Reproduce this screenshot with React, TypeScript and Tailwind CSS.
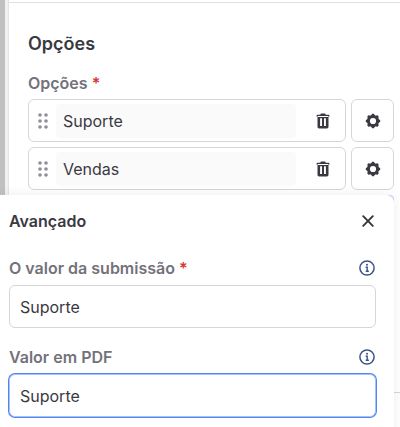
import { useState } from 'react';

interface OptionRowProps {
  label: string;
  active?: boolean;
}

interface AdvancedFieldProps {
  id: string;
  label: string;
  required?: boolean;
  focused?: boolean;
}

function GripIcon() {
  return (
    <svg width="10" height="16" viewBox="0 0 10 16" fill="#8e8d96" aria-hidden="true">
      {[2, 8, 14].map((y) => (
        <g key={y}>
          <circle cx="2" cy={y} r="1.8" />
          <circle cx="8" cy={y} r="1.8" />
        </g>
      ))}
    </svg>
  );
}

function TrashIcon() {
  return (
    <svg width="14" height="16" viewBox="0 0 14 16" fill="#3a3941" aria-hidden="true">
      <path
        fillRule="evenodd"
        d="M5 .5h4l.8 1.200H13.300v2.200H.7V1.700h3.500zM1.500 3h11v10.800q0 1.600-1.600 1.600H3.100q-1.600 0-1.600-1.600zM4.100 5.200v7.800h1.900V5.200zM8 5.200v7.800h1.900V5.200z"
      />
    </svg>
  );
}

function GearIcon() {
  return (
    <svg width="16" height="16" viewBox="0 0 16 16" aria-hidden="true">
      <g fill="#3a3941">
        {[0, 45, 90, 135, 180, 225, 270, 315].map((angle) => (
          <path key={angle} d="M5.600 3L7.200.8h1.600L10.400 3z" transform={`rotate(${angle} 8 8)`} />
        ))}
      </g>
      <circle cx="8" cy="8" r="4.400" fill="none" stroke="#3a3941" strokeWidth="2.600" />
    </svg>
  );
}

function InfoIcon() {
  return (
    <svg width="16" height="16" viewBox="0 0 16 16" fill="none" stroke="#3c5488" aria-hidden="true">
      <circle cx="8" cy="8" r="7.100" strokeWidth="1.500" />
      <path d="M6.600 7.200h1.600v4M6.700 11.300h3.200" strokeWidth="1.400" />
      <circle cx="8" cy="4.700" r="1" fill="#3c5488" stroke="none" />
    </svg>
  );
}

function CloseIcon() {
  return (
    <svg width="12" height="12" viewBox="0 0 12 12" stroke="#35343b" strokeWidth="1.900" strokeLinecap="round" aria-hidden="true">
      <path d="M1.200 1.200l9.600 9.600M10.800 1.200l-9.600 9.600" />
    </svg>
  );
}

function OptionRow({ label, active }: OptionRowProps) {
  const [value, setValue] = useState(label);

  return (
    <div className="flex h-[43px] gap-[5px]">
      <div className="flex min-w-0 flex-1 items-center rounded-md border border-[#d6d6d8] pr-[15px] pl-[9px]">
        <GripIcon />
        <input
          aria-label="Opção"
          value={value}
          onChange={(e) => setValue(e.target.value)}
          className="ml-2 h-[34px] min-w-0 flex-1 rounded bg-[#fafafa] px-[7px] text-base text-[#3a3941] outline-none"
        />
        <button type="button" aria-label="Remover" className="ml-5">
          <TrashIcon />
        </button>
      </div>
      <button
        type="button"
        aria-label="Configurar"
        className={`flex w-[43px] items-center justify-center border ${
          active ? 'rounded border-[#c9d6fb] bg-[#dce6fd]' : 'rounded-md border-[#d6d6d8]'
        }`}
      >
        <GearIcon />
      </button>
    </div>
  );
}

function AdvancedField({ id, label, required, focused }: AdvancedFieldProps) {
  const [value, setValue] = useState('Suporte');

  return (
    <div>
      <div className="mb-px flex h-8 items-center justify-between">
        <label htmlFor={id} className="text-base font-semibold text-[#73727b]">
          {label}
          {required && <span className="text-[#d33a2f]"> *</span>}
        </label>
        <button type="button" aria-label="Mais informações" className="mr-px">
          <InfoIcon />
        </button>
      </div>
      <input
        id={id}
        value={value}
        onChange={(e) => setValue(e.target.value)}
        className={`h-[43px] w-full rounded-md border bg-white px-2.5 text-base text-[#3a3941] outline-none ${
          focused ? 'border-[#a9c2f5] ring-1 ring-[#4f86f0]' : 'border-[#d6d6d8]'
        }`}
      />
    </div>
  );
}

export default function App() {
  return (
    <div className="relative flex min-h-screen overflow-hidden bg-white font-['Inter',sans-serif]">
      <div className="w-[5px] shrink-0 bg-[#c0c0c0]" />
      <div className="w-1 shrink-0 border-r border-[#e4e4e4] bg-[#f1f1f1]" />

      <main className="min-w-0 flex-1">
        <div className="h-[3px] border-b border-[#e0e0e0]" />
        <section className="border-b border-[#d6d6d8] pt-[29px] pr-1.5 pb-[154px] pl-[19px]">
          <h2 className="text-lg leading-6 font-semibold text-[#3a3941]">Opções</h2>
          <h3 className="mt-[15px] text-base leading-6 font-semibold text-[#73727b]">
            Opções <span className="text-[#d33a2f]">*</span>
          </h3>

          <div className="mt-1 space-y-[5px]">
            <OptionRow label="Suporte" />
            <OptionRow label="Vendas" />

            {/* opens over the row it belongs to */}
            <div
              role="dialog"
              aria-labelledby="advanced-title"
              className="absolute right-1.5 left-0 z-10 rounded-tr-lg bg-white pt-2.5 pr-[18px] pb-6 pl-[9px] shadow-[0_0_12px_rgba(0,0,0,0.08)]"
            >
              <div className="flex h-8 items-center justify-between">
                <h2 id="advanced-title" className="text-base font-semibold text-[#3a3941]">
                  Avançado
                </h2>
                <button type="button" aria-label="Fechar" className="mr-0.5">
                  <CloseIcon />
                </button>
              </div>
              <div className="mt-[15px] space-y-[13px]">
                <AdvancedField id="submission-value" label="O valor da submissão" required />
                <AdvancedField id="pdf-value" label="Valor em PDF" focused />
              </div>
            </div>

            <OptionRow label="" active />
          </div>
        </section>
      </main>
    </div>
  );
}
